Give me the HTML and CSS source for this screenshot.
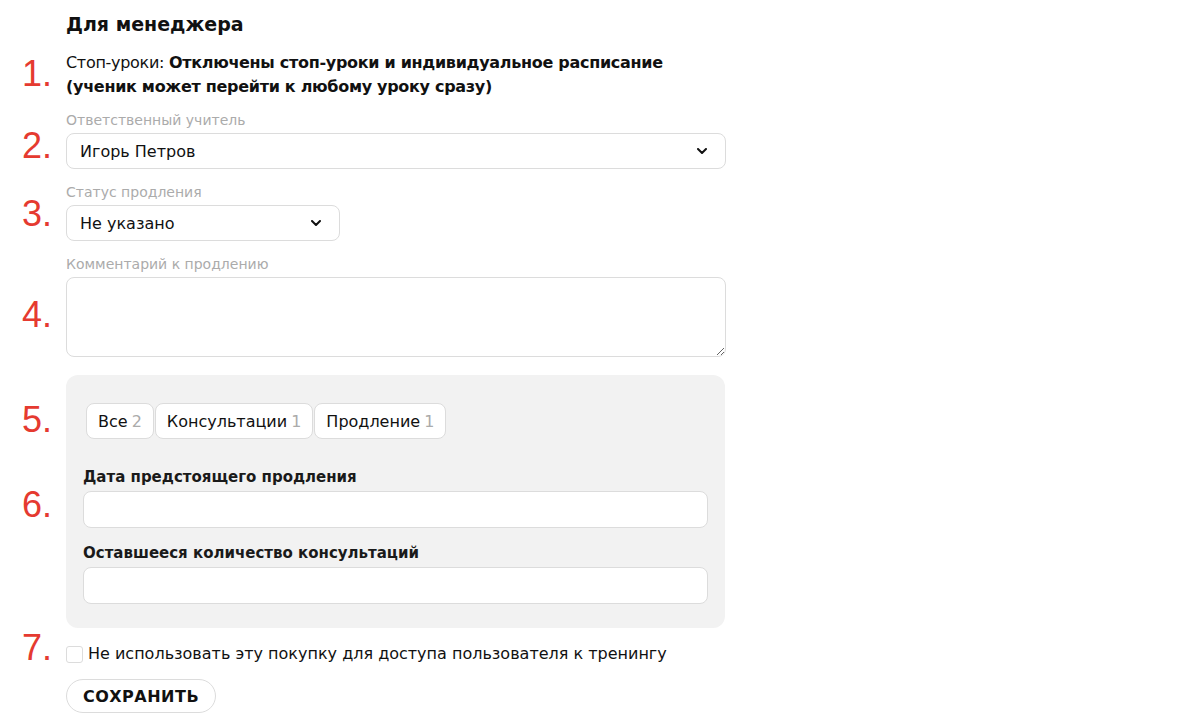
FILE: index.html
```html
<!DOCTYPE html>
<html lang="ru">
<head>
<meta charset="utf-8">
<title>Для менеджера</title>
<link rel="stylesheet" href="styles.css">
</head>
<body>
<div class="page">
  <div class="row row-head">
    <div class="num"></div>
    <h2 class="title">Для менеджера</h2>
  </div>

  <div class="row row1">
    <div class="num num1">1.</div>
    <div class="info">
      <div class="line"><span>Стоп-уроки: </span><b>Отключены стоп-уроки и индивидуальное расписание</b></div>
      <div class="line"><b>(ученик может перейти к любому уроку сразу)</b></div>
    </div>
  </div>

  <div class="row row2">
    <div class="num num2">2.</div>
    <div class="group">
      <div class="label">Ответственный учитель</div>
      <div class="select select-wide">
        <span>Игорь Петров</span>
        <svg class="chev" width="10" height="6" viewBox="0 0 10 6"><path d="M1 1l4 4 4-4" fill="none" stroke="#111" stroke-width="2" stroke-linecap="round" stroke-linejoin="round"/></svg>
      </div>
    </div>
  </div>

  <div class="row row3">
    <div class="num num3">3.</div>
    <div class="group">
      <div class="label">Статус продления</div>
      <div class="select select-short">
        <span>Не указано</span>
        <svg class="chev" width="10" height="6" viewBox="0 0 10 6"><path d="M1 1l4 4 4-4" fill="none" stroke="#111" stroke-width="2" stroke-linecap="round" stroke-linejoin="round"/></svg>
      </div>
    </div>
  </div>

  <div class="row row4">
    <div class="num num4">4.</div>
    <div class="group">
      <div class="label">Комментарий к продлению</div>
      <textarea class="comment"></textarea>
    </div>
  </div>

  <div class="row row5">
    <div class="nums">
      <div class="num num5">5.</div>
      <div class="num num6">6.</div>
    </div>
    <div class="panel">
      <div class="tabs">
        <div class="tab">Все <span class="count">2</span></div>
        <div class="tab">Консультации <span class="count">1</span></div>
        <div class="tab">Продление <span class="count">1</span></div>
      </div>
      <div class="field field-first">
        <div class="flabel">Дата предстоящего продления</div>
        <div class="input"></div>
      </div>
      <div class="field">
        <div class="flabel">Оставшееся количество консультаций</div>
        <div class="input"></div>
      </div>
    </div>
  </div>

  <div class="row row7">
    <div class="num num7">7.</div>
    <div class="bottom">
      <label class="check">
        <span class="box"></span>
        <span>Не использовать эту покупку для доступа пользователя к тренингу</span>
      </label>
      <button class="save">Сохранить</button>
    </div>
  </div>
</div>
</body>
</html>
```

FILE: styles.css
```css
* { box-sizing: border-box; }
html, body { margin: 0; padding: 0; background: #fff; }
body {
  font-family: "DejaVu Sans", "Noto Sans", sans-serif;
  color: #111;
  font-size: 16px;
}
.page { width: 1200px; }

.row {
  display: grid;
  grid-template-columns: 66px 660px;
  align-items: start;
}
.num {
  font-family: "Liberation Sans", Arial, sans-serif;
  font-size: 36px;
  line-height: 36px;
  color: #e53a30;
  padding-left: 22px;
}

.row-head { margin-top: 12px; }
.title {
  margin: 0;
  font-size: 19px;
  line-height: 24px;
  font-weight: 700;
}

.row1 { margin-top: 15px; }
.num1 { margin-top: 5px; }
.info { font-size: 16px; }
.line { line-height: 24px; white-space: nowrap; }
.line span { letter-spacing: -0.3px; }
.line b { font-weight: 700; letter-spacing: -0.3px; }

.row2 { margin-top: 12px; }
.num2 { margin-top: 17px; }
.row3 { margin-top: 14px; }
.num3 { margin-top: 13px; }
.row4 { margin-top: 14px; }
.num4 { margin-top: 42px; }

.label {
  font-size: 14px;
  line-height: 18px;
  color: #ababab;
  margin-bottom: 4px;
}
.select {
  height: 36px;
  border: 1px solid #dcdcdc;
  border-radius: 8px;
  background: #fff;
  display: flex;
  align-items: center;
  justify-content: space-between;
  padding: 0 18px 0 13px;
  font-size: 16px;
}
.select-wide { width: 660px; }
.select-short { width: 274px; }
.chev { display: block; }

.comment {
  display: block;
  width: 660px;
  height: 80px;
  margin: 0;
  border: 1px solid #dcdcdc;
  border-radius: 8px;
  background: #fff;
  font: inherit;
  resize: vertical;
  outline: none;
}

.row5 { margin-top: 18px; }
.nums { display: flex; flex-direction: column; }
.num5 { margin-top: 27px; }
.num6 { margin-top: 49px; }
.panel {
  width: 659px;
  background: #f2f2f2;
  border-radius: 12px;
  padding: 28px 17px 24px 17px;
}
.tabs { display: flex; gap: 1px; margin-left: 3px; }
.tab {
  height: 36px;
  display: flex;
  align-items: center;
  padding: 0 11px;
  background: #fff;
  border: 1px solid #dcdcdc;
  border-radius: 8px;
  font-size: 16px;
  white-space: nowrap;
}
.count { color: #ababab; margin-left: 4px; }

.field { margin-top: 15px; }
.field-first { margin-top: 28px; }
.flabel {
  font-size: 15px;
  line-height: 20px;
  font-weight: 700;
  margin-bottom: 4px;
  color: #1a1a1a;
}
.input {
  height: 37px;
  width: 625px;
  background: #fff;
  border: 1px solid #dcdcdc;
  border-radius: 8px;
}

.row7 { margin-top: 2px; }
.bottom { padding-top: 15px; }
.check {
  display: flex;
  align-items: center;
  gap: 5px;
  font-size: 16px;
  line-height: 18px;
}
.box {
  width: 17px;
  height: 17px;
  border: 1px solid #dcdcdc;
  border-radius: 3px;
  background: #fff;
  flex: none;
}
.save {
  display: block;
  margin-top: 16px;
  width: 150px;
  height: 34px;
  border: 1px solid #dcdcdc;
  border-radius: 17px;
  background: #fff;
  font-family: inherit;
  font-size: 16px;
  font-weight: 700;
  text-transform: uppercase;
  letter-spacing: 0.5px;
  color: #111;
  padding: 0;
}
```
